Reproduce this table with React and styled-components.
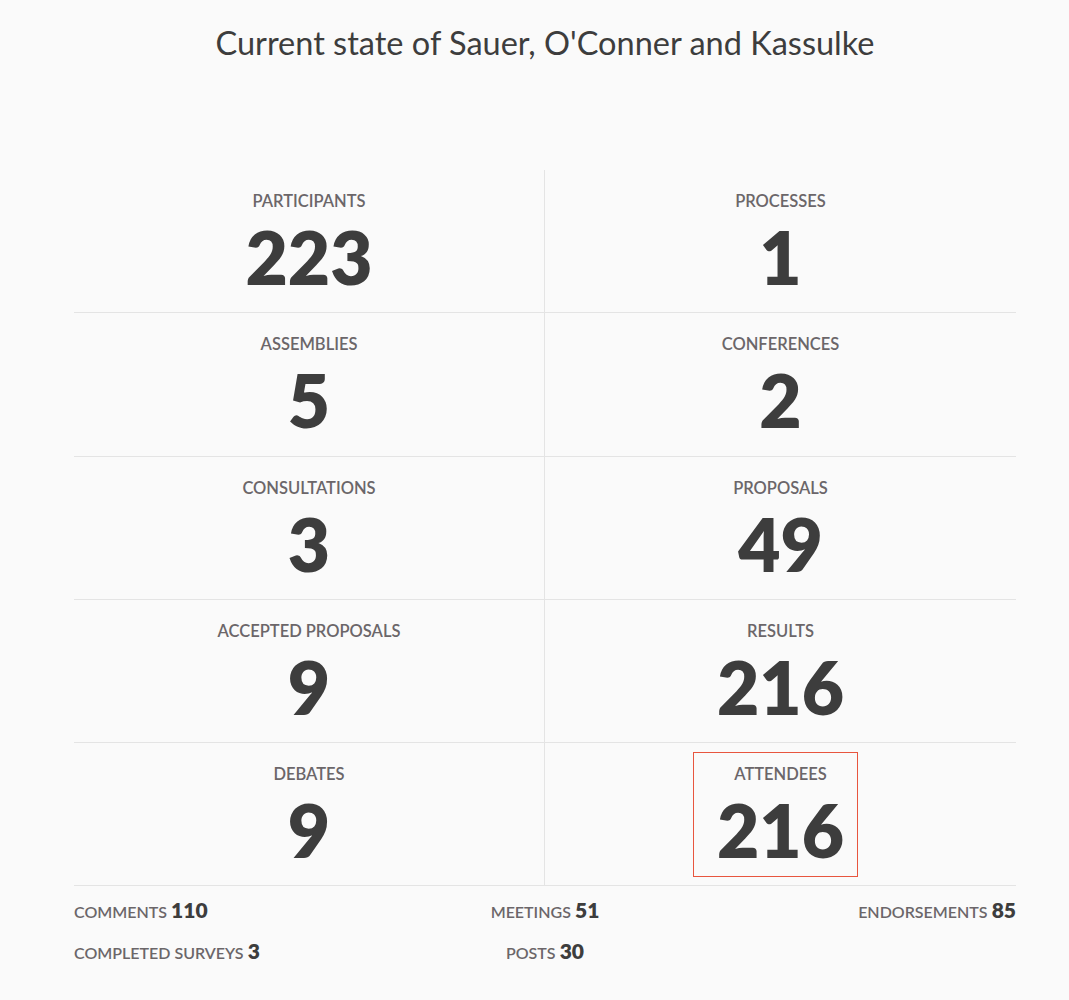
import React from "react";
import styled, { createGlobalStyle } from "styled-components";

const GlobalStyle = createGlobalStyle`
  html, body {
    margin: 0;
    padding: 0;
    background: #fafafa;
    font-family: "Lato", "Open Sans", sans-serif;
    color: #3d3d3d;
  }
`;

const stats = [
  ["Participants", 223],
  ["Processes", 1],
  ["Assemblies", 5],
  ["Conferences", 2],
  ["Consultations", 3],
  ["Proposals", 49],
  ["Accepted proposals", 9],
  ["Results", 216],
  ["Debates", 9],
  ["Attendees", 216, true],
];

const extras = [
  ["Comments", 110, "start"],
  ["Meetings", 51, "center"],
  ["Endorsements", 85, "end"],
  ["Completed surveys", 3, "start"],
  ["Posts", 30, "center"],
];

export default function App() {
  return (
    <>
      <GlobalStyle />
      <PAGE>
        <TITLE>Current state of Sauer, O'Conner and Kassulke</TITLE>
        <GRID>
          {stats.map(([label, value, focused], i) => (
            <CELL key={label} $right={i % 2 === 1}>
              <STAT $focused={!!focused}>
                <LABEL>{label}</LABEL>
                <NUMBER>{value}</NUMBER>
              </STAT>
            </CELL>
          ))}
        </GRID>
        <EXTRAS>
          {extras.map(([label, value, align]) => (
            <EXTRA key={label} $align={align}>
              <EXTRALABEL>{label}</EXTRALABEL> <SMALLNUMBER>{value}</SMALLNUMBER>
            </EXTRA>
          ))}
        </EXTRAS>
      </PAGE>
    </>
  );
}

const PAGE = styled.div`
  width: 942px;
  padding: 0 53px 0 74px;
`;

const TITLE = styled.h1`
  margin: 0;
  padding-top: 23px;
  height: 170px;
  box-sizing: border-box;
  text-align: center;
  font-size: 32.5px;
  font-weight: 400;
  color: #3d3d3d;
  line-height: 40px;
`;

const GRID = styled.div`
  display: grid;
  grid-template-columns: 1fr 1fr;
`;

const CELL = styled.div`
  height: 143.3px;
  box-sizing: border-box;
  border-bottom: 1px solid #e4e4e4;
  border-right: ${(p) => (p.$right ? "none" : "1px solid #e4e4e4")};
  display: flex;
  justify-content: center;
  align-items: flex-start;
  padding-top: 9px;
`;

const STAT = styled.div`
  display: flex;
  flex-direction: column;
  align-items: center;
  padding: 11px 13px 0 23px;
  margin-left: -10px;
  border-width: 1px;
  border-style: solid;
  border-color: ${(p) => (p.$focused ? "#e8553e" : "transparent")};
`;

const LABEL = styled.div`
  font-size: 16.5px;
  font-weight: 600;
  text-transform: uppercase;
  color: #6b6669;
`;

const EXTRALABEL = styled.span`
  font-size: 16px;
  font-weight: 600;
  text-transform: uppercase;
  color: #6b6669;
`;

const NUMBER = styled.div`
  font-size: 73px;
  font-weight: 800;
  line-height: 92px;
  color: #3d3d3d;
`;

const EXTRAS = styled.div`
  display: grid;
  grid-template-columns: 1fr 1fr 1fr;
  row-gap: 15px;
  padding-top: 12px;
`;

const EXTRA = styled.div`
  justify-self: ${(p) => p.$align};
  line-height: 24px;
`;

const SMALLNUMBER = styled.span`
  font-size: 21px;
  font-weight: 800;
  color: #3d3d3d;
`;
